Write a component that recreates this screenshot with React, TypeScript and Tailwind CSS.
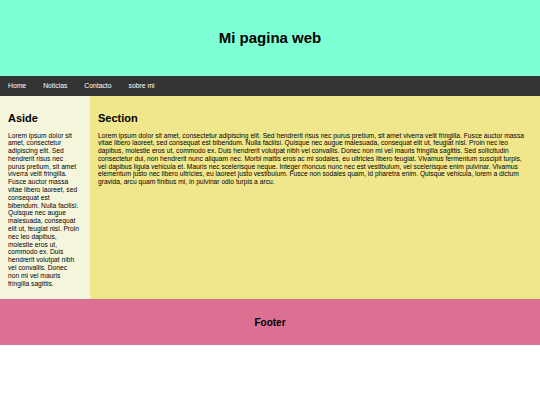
export default function App() {
  const lorem =
    "Lorem ipsum dolor sit amet, consectetur adipiscing elit. Sed hendrerit risus nec purus pretium, sit amet viverra velit fringilla. Fusce auctor massa vitae libero laoreet, sed consequat est bibendum. Nulla facilisi. Quisque nec augue malesuada, consequat elit ut, feugiat nisl. Proin nec leo dapibus, molestie eros ut, commodo ex. Duis hendrerit volutpat nibh vel convallis. Donec non mi vel mauris fringilla sagittis. Sed sollicitudin consectetur dui, non hendrerit nunc aliquam nec. Morbi mattis eros ac mi sodales, eu ultricies libero feugiat. Vivamus fermentum suscipit turpis, vel dapibus ligula vehicula et. Mauris nec scelerisque neque. Integer rhoncus nunc nec est vestibulum, vel scelerisque enim pulvinar. Vivamus elementum justo nec libero ultricies, eu laoreet justo vestibulum. Fusce non sodales quam, id pharetra enim. Quisque vehicula, lorem a dictum gravida, arcu quam finibus mi, in pulvinar odio turpis a arcu."
  const asideText =
    "Lorem ipsum dolor sit amet, consectetur adipiscing elit. Sed hendrerit risus nec purus pretium, sit amet viverra velit fringilla. Fusce auctor massa vitae libero laoreet, sed consequat est bibendum. Nulla facilisi. Quisque nec augue malesuada, consequat elit ut, feugiat nisl. Proin nec leo dapibus, molestie eros ut, commodo ex. Duis hendrerit volutpat nibh vel convallis. Donec non mi vel mauris fringilla sagittis."

  return (
    <div className="min-h-screen bg-white text-black" style={{ fontFamily: '"Liberation Sans", Arial, sans-serif' }}>
      {/* header */}
      <header className="h-[76px] bg-[#7fffd4] flex items-center justify-center">
        <h1 className="text-[15px] font-bold">Mi pagina web</h1>
      </header>

      {/* nav */}
      <nav className="h-[20px] bg-[#333333] flex items-center pl-2 gap-[17px]">
        {["Home", "Noticias", "Contacto", "sobre mi"].map((item) => (
          <a key={item} href="#" className="text-[6.8px] text-white">
            {item}
          </a>
        ))}
      </nav>

      {/* main */}
      <div className="flex h-[203px]">
        <aside className="w-[90px] bg-[#f5f5dc] pl-2 pr-[10px] pt-[14px]">
          <h2 className="text-[11px] font-bold mb-[5px]">Aside</h2>
          <p className="text-[6.7px] leading-[7.8px]">{asideText}</p>
        </aside>
        <section className="flex-1 bg-[#f0e68c] pl-2 pr-[9px] pt-[14px]">
          <h2 className="text-[11px] font-bold mb-[5px]">Section</h2>
          <p className="text-[6.7px] leading-[7.8px]">{lorem}</p>
        </section>
      </div>

      {/* footer */}
      <footer className="h-[46px] bg-[#db7093] flex items-center justify-center">
        <h3 className="text-[10px] font-bold">Footer</h3>
      </footer>
    </div>
  )
}
